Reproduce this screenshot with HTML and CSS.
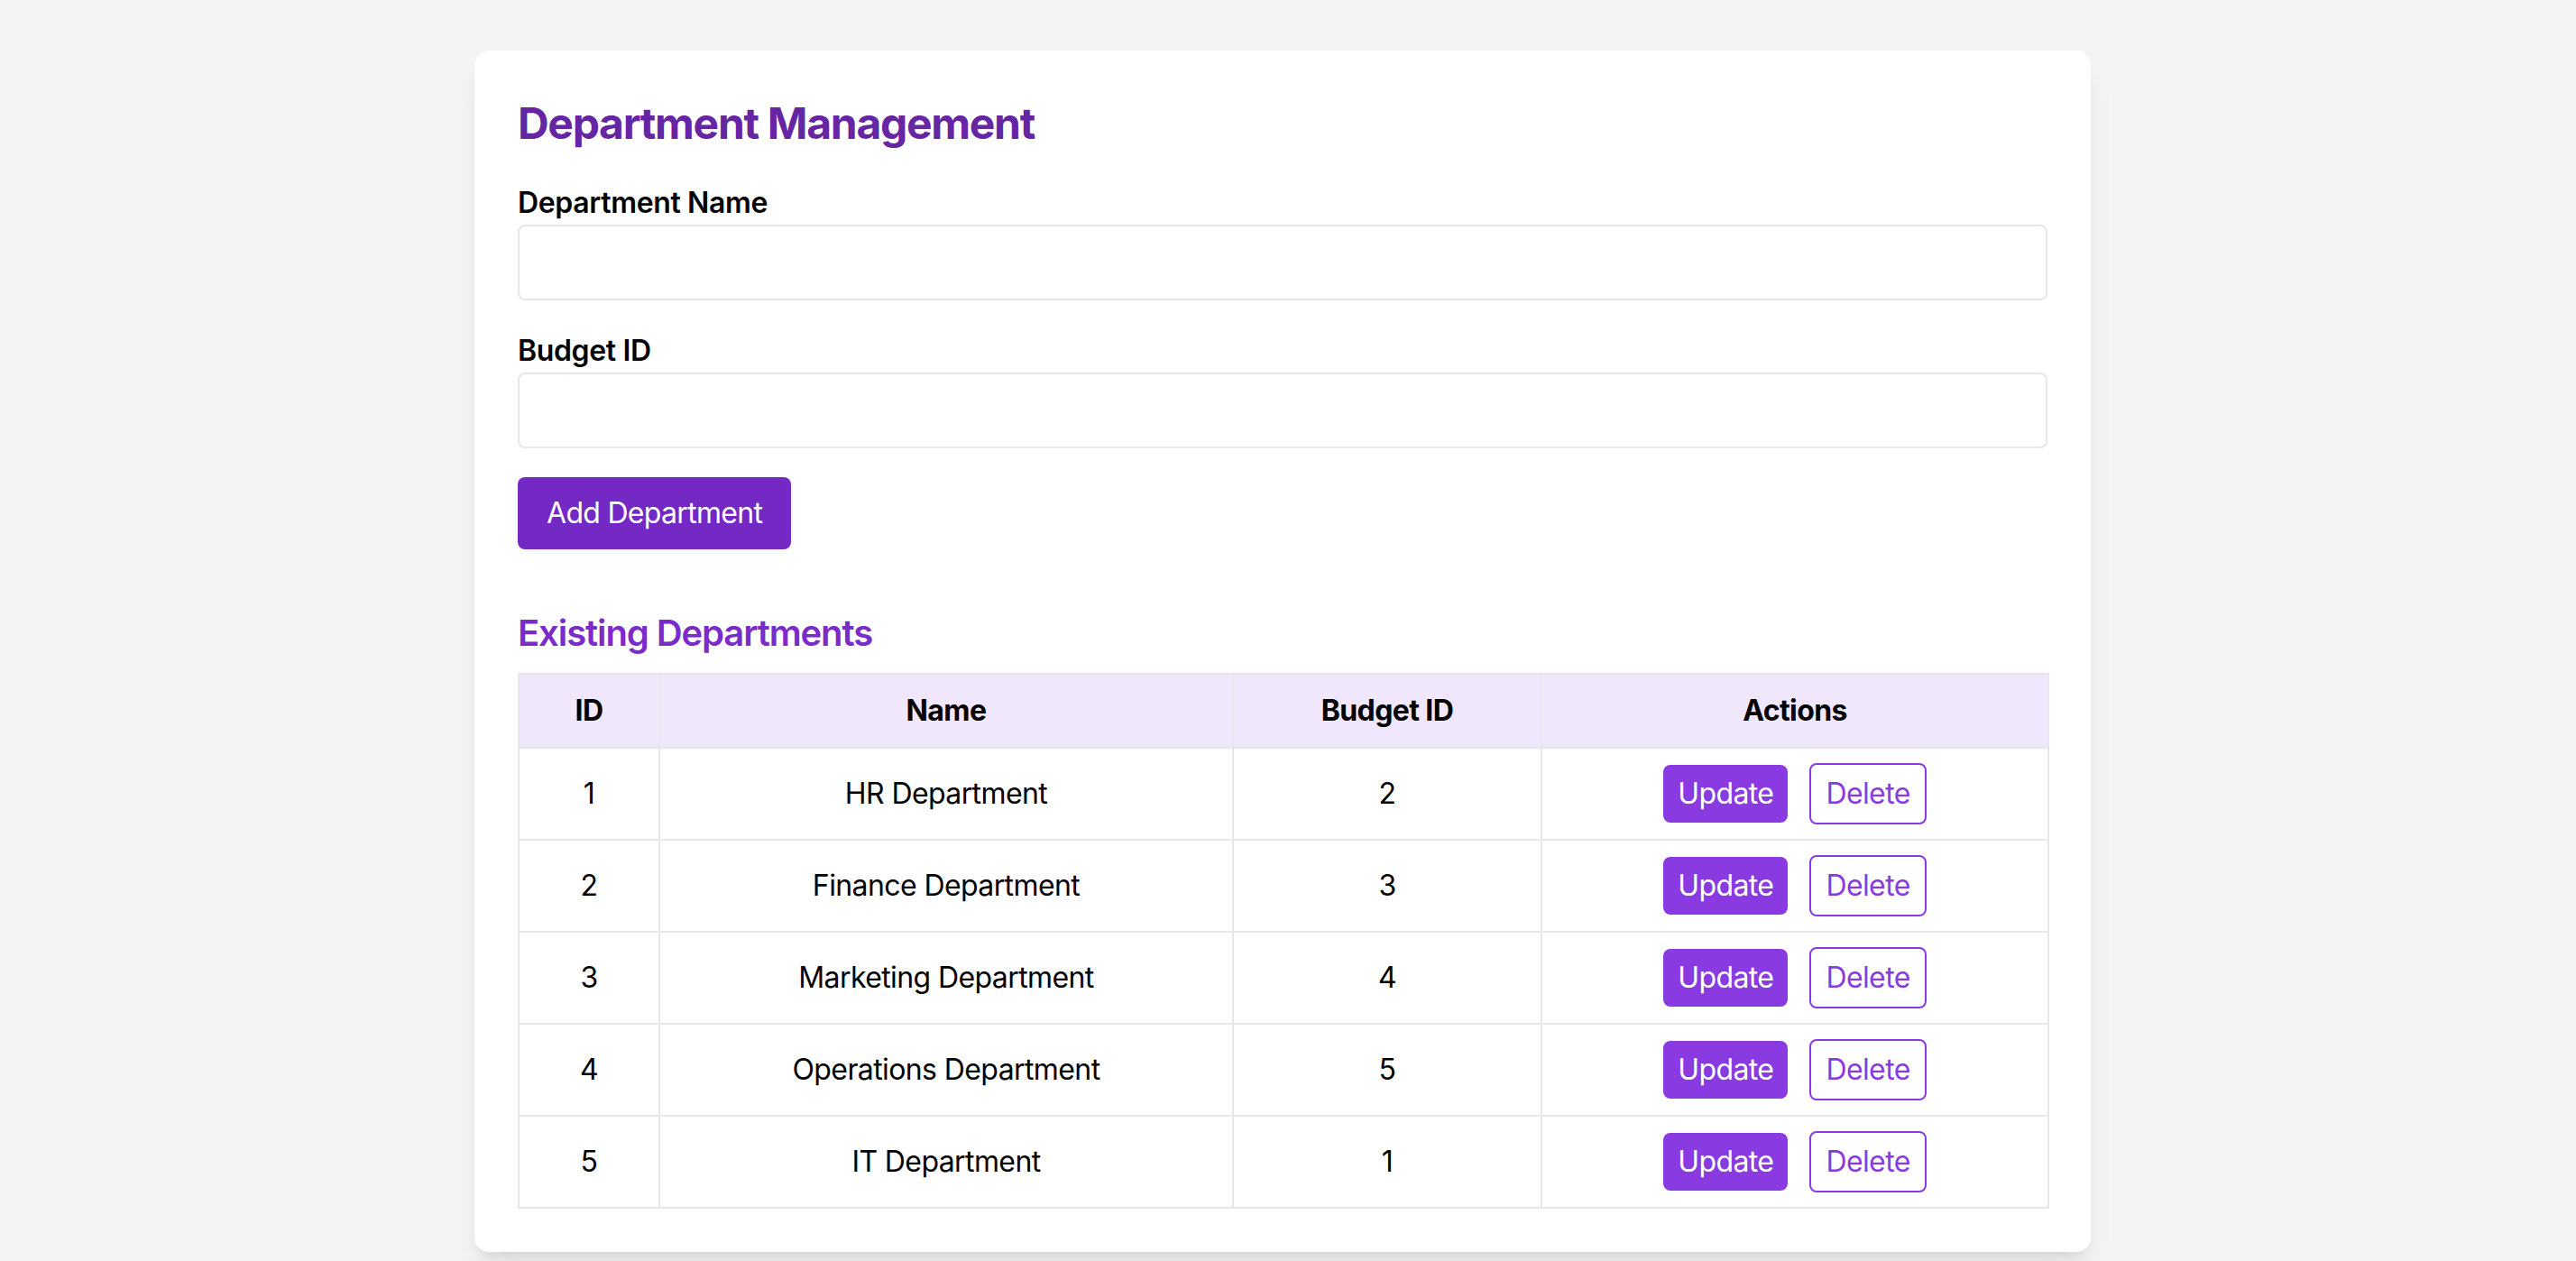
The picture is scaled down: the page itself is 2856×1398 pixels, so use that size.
FILE: index.html
```html
<!DOCTYPE html>
<html lang="en">
<head>
<meta charset="utf-8">
<title>Department Management</title>
<link rel="stylesheet" href="styles.css">
</head>
<body>
<div class="page">
  <main class="card">
    <h1 class="title">Department Management</h1>
    <form class="form">
      <div class="field">
        <label class="label" for="dname">Department Name</label>
        <input class="input" id="dname" type="text">
      </div>
      <div class="field">
        <label class="label" for="bid">Budget ID</label>
        <input class="input" id="bid" type="text">
      </div>
      <button type="button" class="btn-primary">Add Department</button>
    </form>
    <h2 class="subtitle">Existing Departments</h2>
    <table class="table">
      <colgroup>
        <col class="col-id">
        <col class="col-name">
        <col class="col-budget">
        <col class="col-actions">
      </colgroup>
      <thead>
        <tr><th>ID</th><th>Name</th><th>Budget ID</th><th>Actions</th></tr>
      </thead>
      <tbody>
        <tr><td>1</td><td>HR Department</td><td>2</td><td><div class="actions"><button class="btn-update">Update</button><button class="btn-delete">Delete</button></div></td></tr>
        <tr><td>2</td><td>Finance Department</td><td>3</td><td><div class="actions"><button class="btn-update">Update</button><button class="btn-delete">Delete</button></div></td></tr>
        <tr><td>3</td><td>Marketing Department</td><td>4</td><td><div class="actions"><button class="btn-update">Update</button><button class="btn-delete">Delete</button></div></td></tr>
        <tr><td>4</td><td>Operations Department</td><td>5</td><td><div class="actions"><button class="btn-update">Update</button><button class="btn-delete">Delete</button></div></td></tr>
        <tr><td>5</td><td>IT Department</td><td>1</td><td><div class="actions"><button class="btn-update">Update</button><button class="btn-delete">Delete</button></div></td></tr>
      </tbody>
    </table>
  </main>
</div>
</body>
</html>
```

FILE: styles.css
```css
* { box-sizing: border-box; }
html, body {
  margin: 0;
  padding: 0;
  height: 100%;
  overflow: hidden;
  background: #f3f4f6;
}
body {
  font-family: Inter, "Liberation Sans", sans-serif;
  color: #000;
}
.page {
  padding: 56px 12px 0 0;
  display: flex;
  justify-content: center;
}
.card {
  width: 1792px;
  background: #fff;
  border-radius: 16px;
  padding: 48px;
  box-shadow: 0 20px 30px -6px rgba(0,0,0,0.10), 0 8px 12px -8px rgba(0,0,0,0.08);
}
.title {
  margin: 0 0 32px;
  padding-top: 1px;
  font-size: 48px;
  line-height: 64px;
  font-weight: 700;
  color: #6625a2;
  letter-spacing: -1.3px;
}
.form {
  margin: 0 0 65px;
}
.field {
  margin-bottom: 32px;
}
.label {
  display: block;
  font-size: 32px;
  line-height: 48px;
  font-weight: 600;
  color: #000;
  letter-spacing: -0.35px;
}
.input {
  display: block;
  width: 100%;
  height: 84px;
  border: 2px solid #e6e6eb;
  border-radius: 8px;
  padding: 16px;
  font: inherit;
  font-size: 32px;
  outline: none;
  background: #fff;
}
.btn-primary {
  display: block;
  height: 80px;
  padding: 0 32px;
  border: none;
  border-radius: 8px;
  background: #7428c4;
  color: #fff;
  font-family: inherit;
  font-size: 32px;
  line-height: 48px;
  font-weight: 400;
  letter-spacing: -0.7px;
}
.subtitle {
  margin: 0 0 16px;
  font-size: 40px;
  line-height: 56px;
  font-weight: 600;
  color: #7a2bca;
  letter-spacing: -1.1px;
}
.table {
  width: 100%;
  border-collapse: collapse;
  table-layout: fixed;
}
.col-id { width: 156px; }
.col-name { width: 636px; }
.col-budget { width: 342px; }
.col-actions { width: 562px; }
.table th, .table td {
  border: 2px solid #e6e6eb;
  padding: 16px;
  text-align: center;
  font-size: 32px;
  line-height: 48px;
  letter-spacing: -0.6px;
}
.table th {
  background: #f1e7fc;
  font-weight: 700;
}
.table td {
  font-weight: 400;
  height: 102px;
}
.actions {
  display: flex;
  justify-content: center;
  align-items: center;
  gap: 24px;
}
.btn-update {
  height: 64px;
  padding: 0 16px;
  border: none;
  border-radius: 8px;
  background: #893ae1;
  color: #fff;
  font-family: inherit;
  font-size: 32px;
  line-height: 48px;
  letter-spacing: -0.6px;
}
.btn-delete {
  height: 68px;
  padding: 0 16px;
  border: 2px solid #893ae1;
  border-radius: 8px;
  background: #fff;
  color: #893ae1;
  font-family: inherit;
  font-size: 32px;
  line-height: 48px;
  letter-spacing: -0.6px;
}
```
